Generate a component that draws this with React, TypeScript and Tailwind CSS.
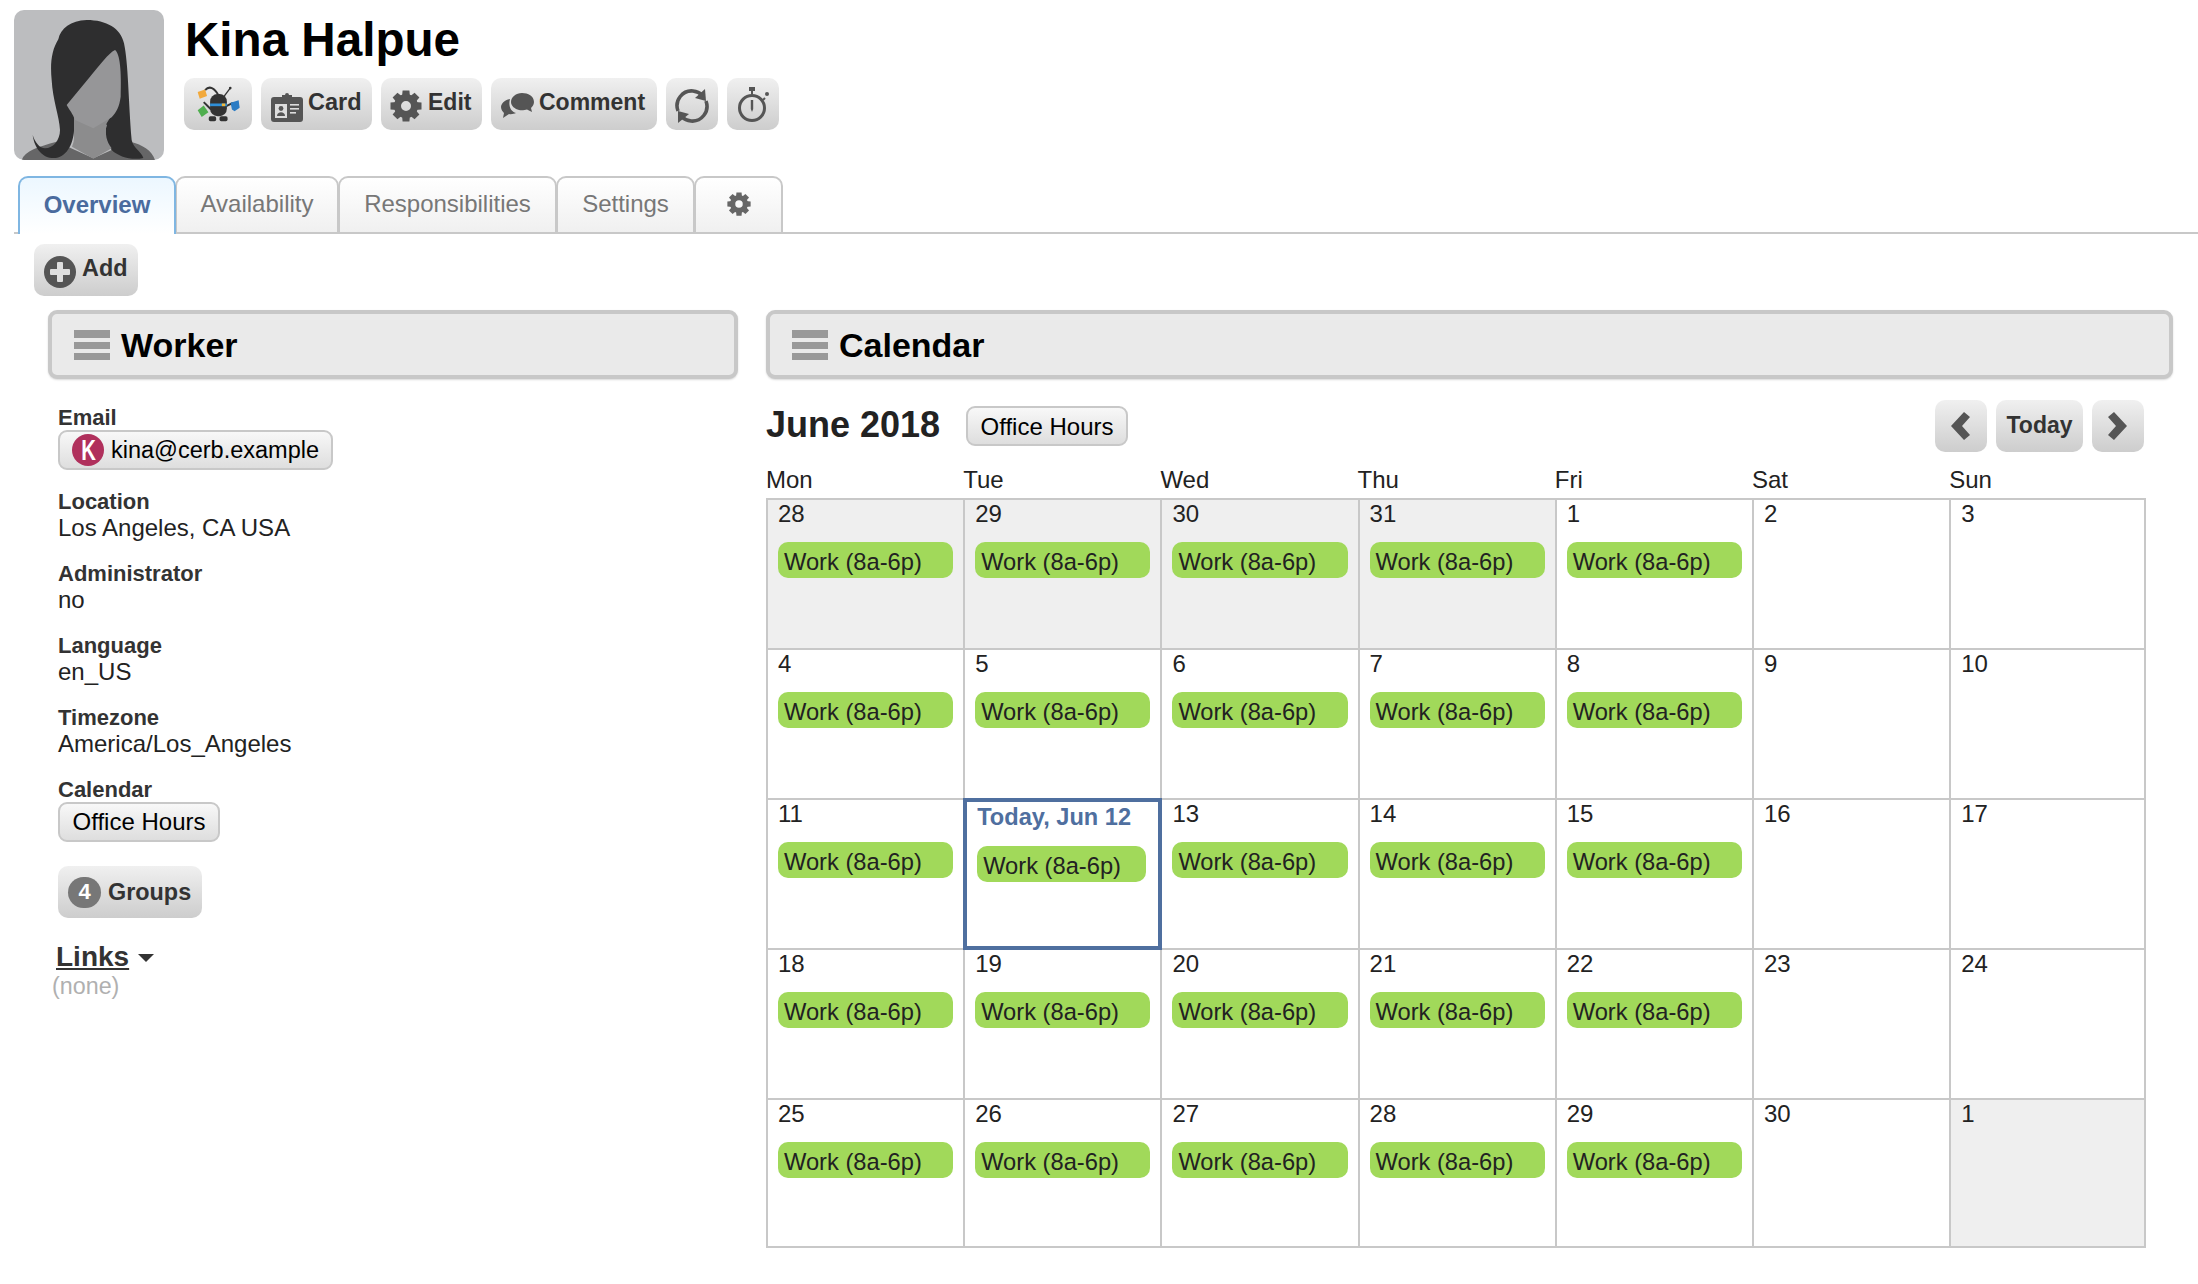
import React from 'react';

const weeks = [
  [
    { d: '28', out: true, work: true },
    { d: '29', out: true, work: true },
    { d: '30', out: true, work: true },
    { d: '31', out: true, work: true },
    { d: '1', work: true },
    { d: '2' },
    { d: '3' },
  ],
  [
    { d: '4', work: true },
    { d: '5', work: true },
    { d: '6', work: true },
    { d: '7', work: true },
    { d: '8', work: true },
    { d: '9' },
    { d: '10' },
  ],
  [
    { d: '11', work: true },
    { d: 'Today, Jun 12', work: true, today: true },
    { d: '13', work: true },
    { d: '14', work: true },
    { d: '15', work: true },
    { d: '16' },
    { d: '17' },
  ],
  [
    { d: '18', work: true },
    { d: '19', work: true },
    { d: '20', work: true },
    { d: '21', work: true },
    { d: '22', work: true },
    { d: '23' },
    { d: '24' },
  ],
  [
    { d: '25', work: true },
    { d: '26', work: true },
    { d: '27', work: true },
    { d: '28', work: true },
    { d: '29', work: true },
    { d: '30' },
    { d: '1', out: true },
  ],
];

const days = ['Mon', 'Tue', 'Wed', 'Thu', 'Fri', 'Sat', 'Sun'];

const fields = [
  { label: 'Location', value: 'Los Angeles, CA USA' },
  { label: 'Administrator', value: 'no' },
  { label: 'Language', value: 'en_US' },
  { label: 'Timezone', value: 'America/Los_Angeles' },
];

const Gear = ({ size, color = '#555' }: { size: number; color?: string }) => (
  <svg width={size} height={size} viewBox="0 0 32 32">
    {[0, 45, 90, 135, 180, 225, 270, 315].map((a) => (
      <path key={a} d="M12.6,0.5 H19.4 L20,7 H12 Z" fill={color} transform={`rotate(${a} 16 16)`} />
    ))}
    <circle cx="16" cy="16" r="8.5" fill="none" stroke={color} strokeWidth="7" />
  </svg>
);

const Avatar = () => (
  <svg width="150" height="150" viewBox="42 30 450 450" className="block">
    <path d="M65,480 C75,452 115,440 170,425 L280,475 L390,425 C430,435 455,450 465,480 Z" fill="#666667" />
    <path
      d="M260,60 C212,62 182,85 175,118 C155,150 150,190 155,240 C158,300 178,350 180,390 C180,420 160,445 135,445 C120,445 105,428 98,405 C104,448 130,478 168,474 C205,468 225,420 222,375 L320,375 C312,410 318,430 335,450 C355,470 395,482 430,474 C425,455 400,445 395,420 C385,300 385,190 372,130 C362,85 320,60 260,60 Z"
      fill="#2e2e2f"
    />
    <path d="M222,350 L222,400 C222,420 222,425 216,440 L280,476 L335,445 C320,425 314,405 320,370 L345,330 Z" fill="#8c8c8d" />
    <path
      d="M345,150 C360,160 365,215 362,290 C358,320 350,335 335,352 L280,385 L225,360 C218,340 208,330 200,315 L270,230 C300,195 325,160 345,150 Z"
      fill="#969698"
    />
  </svg>
);

const Robot = () => (
  <svg width="47" height="37" viewBox="82 80 140 110">
    <path d="M160,122 L187,86" stroke="#333" strokeWidth="4" />
    <circle cx="187" cy="86" r="4" fill="#333" />
    <path d="M112,92 C125,78 140,85 152,108" stroke="#333" strokeWidth="6" fill="none" />
    <path d="M90,98 L112,90 L118,110 L96,118 Z" fill="#f2a93b" />
    <path d="M108,128 L130,150" stroke="#333" strokeWidth="6" />
    <path d="M90,152 L108,138 L122,158 L102,172 Z" fill="#4fae4e" />
    <path d="M175,140 L195,130" stroke="#333" strokeWidth="6" />
    <path d="M188,130 L212,122 L215,145 L200,155 L192,150 Z" fill="#2b7cc4" />
    <rect x="127" y="104" width="50" height="66" rx="22" fill="#333" />
    <rect x="127" y="132" width="50" height="8" fill="#2f8fd8" />
    <rect x="162" y="132" width="10" height="8" fill="#f2b83b" />
    <rect x="123" y="170" width="22" height="15" rx="5" fill="#333" />
    <rect x="155" y="170" width="24" height="15" rx="5" fill="#333" />
  </svg>
);

const CardIcon = () => (
  <svg width="32" height="29" viewBox="0 0 32 29">
    <path
      d="M3,4 H11 V2 H14 a2,2 0 0 1 4,0 H21 V4 H29 a3,3 0 0 1 3,3 V26 a3,3 0 0 1 -3,3 H3 a3,3 0 0 1 -3,-3 V7 a3,3 0 0 1 3,-3 Z"
      fill="#555"
    />
    <rect x="4" y="11" width="12" height="14" fill="#ddd" />
    <circle cx="10" cy="15.5" r="2.4" fill="#555" />
    <path d="M6,23 C6,18 14,18 14,23 Z" fill="#555" />
    <rect x="19" y="11" width="9" height="1.6" fill="#ddd" />
    <rect x="19" y="15" width="9" height="1.6" fill="#ddd" />
    <rect x="19" y="19" width="6" height="1.6" fill="#ddd" />
  </svg>
);

const CommentIcon = () => (
  <svg width="33" height="25" viewBox="0 0 33 25">
    <path d="M9,6 C3,7 0,11 0,14 C0,17 2,19 3,20 L2,25 L8,21 C10,21.5 13,21 15,20 C10,19 7,13 9,6 Z" fill="#555" />
    <path
      d="M21,0 C27,0 33,3 33,9 C33,12 31,14 30,15 L31,19 L26,16.5 C24,17 21,17.5 18,17 C14,16 10,13 10,9 C10,4 15,0 21,0 Z"
      fill="#555"
    />
  </svg>
);

const RefreshIcon = () => (
  <svg width="34" height="34" viewBox="0 0 34 34" fill="none">
    <path d="M3,22 C-1,11 8,1 18,2 C22,2.5 25,4 27,6" stroke="#555" strokeWidth="3.6" />
    <path d="M31,12 C35,23 26,33 16,32 C12,31.5 9,30 7,28" stroke="#555" strokeWidth="3.6" />
    <path d="M30,0 L31,12 L20,9 Z" fill="#555" />
    <path d="M3,34 L3,22 L14,25 Z" fill="#555" />
  </svg>
);

const TimerIcon = () => (
  <svg width="32" height="36" viewBox="0 0 32 36" fill="none">
    <rect x="11" y="0" width="6" height="4" fill="#555" />
    <rect x="13" y="3" width="2" height="4" fill="#555" />
    <circle cx="14" cy="21" r="12.5" stroke="#555" strokeWidth="3" />
    <circle cx="29" cy="7" r="2" fill="#555" />
    <path d="M27,11 L25,13" stroke="#555" strokeWidth="2" />
    <path d="M12.8,13 H15.2 V22 L14,25 L12.8,22 Z" fill="#555" />
  </svg>
);

const PlusCircle = () => (
  <svg width="32" height="32" viewBox="0 0 32 32">
    <circle cx="16" cy="16" r="16" fill="#555" />
    <rect x="13" y="6" width="6" height="20" rx="1" fill="#dedede" />
    <rect x="6" y="13" width="20" height="6" rx="1" fill="#dedede" />
  </svg>
);

const MenuBars = () => (
  <div className="flex flex-col gap-[4px]">
    <div className="h-[8px] w-[36px] bg-[#999]" />
    <div className="h-[7px] w-[36px] bg-[#999]" />
    <div className="h-[7px] w-[36px] bg-[#999]" />
  </div>
);

const ActionButton = ({ children, className = '' }: { children: React.ReactNode; className?: string }) => (
  <div
    className={`flex h-[52px] items-center rounded-[10px] bg-linear-to-b from-[#f0f0f0] to-[#cdcdcd] font-bold text-[#333] ${className}`}
  >
    {children}
  </div>
);

const ChipButton = ({ children, className = '' }: { children: React.ReactNode; className?: string }) => (
  <div
    className={`flex h-[40px] items-center rounded-[9px] border-2 border-[#c8c8c8] bg-linear-to-b from-[#f8f8f8] to-[#dedede] text-black ${className}`}
  >
    {children}
  </div>
);

const SectionHeader = ({ title }: { title: string }) => (
  <div className="flex h-[69px] items-center gap-[11px] rounded-[9px] border-4 border-[#c8c8c8] bg-[#eaeaea] pl-[22px] shadow-[0_1px_2px_rgba(0,0,0,0.15)]">
    <MenuBars />
    <span className="mt-[2px] text-[34px] font-bold text-black">{title}</span>
  </div>
);

const WorkEvent = ({ className = '' }: { className?: string }) => (
  <div className={`flex h-[36px] items-center rounded-[10px] bg-[#a1d95a] pl-[6px] text-[23.7px] text-[#222] ${className}`}>
    <span className="mt-[3px]">Work (8a-6p)</span>
  </div>
);

const Tab = ({ children, className = '' }: { children: React.ReactNode; className?: string }) => (
  <div
    className={`flex items-center justify-center rounded-t-[10px] border-2 border-b-0 bg-linear-to-b pb-[2px] text-[24px] ${className}`}
  >
    {children}
  </div>
);

const App = () => {
  return (
    <div className="h-[1284px] w-[2198px] overflow-hidden bg-white font-['Liberation_Sans',Arial,sans-serif] text-[#222]">
      <div className="flex gap-[20px] pl-[14px] pt-[10px]">
        <div className="h-[150px] w-[150px] overflow-hidden rounded-[10px] bg-[#bcbdbf]">
          <Avatar />
        </div>
        <div>
          <h1 className="ml-[1px] h-[57px] pt-[1px] text-[47.6px] font-bold leading-[57px] text-black">Kina Halpue</h1>
          <div className="mt-[11px] flex gap-[9px] text-[23px]">
            <ActionButton className="w-[68px] justify-center">
              <Robot />
            </ActionButton>
            <ActionButton className="w-[111px] gap-[5px] pl-[10px]">
              <span className="mt-[6px]">
                <CardIcon />
              </span>
              <span className="mb-[3px] text-[23.5px]">Card</span>
            </ActionButton>
            <ActionButton className="w-[101px] gap-[6px] pl-[9px]">
              <span className="mt-[3px]">
                <Gear size={32} />
              </span>
              <span className="mb-[3px]">Edit</span>
            </ActionButton>
            <ActionButton className="w-[166px] gap-[5px] pl-[10px]">
              <span className="mt-[2px]">
                <CommentIcon />
              </span>
              <span className="mb-[3px]">Comment</span>
            </ActionButton>
            <ActionButton className="w-[52px] justify-center">
              <span className="mt-[3px]">
                <RefreshIcon />
              </span>
            </ActionButton>
            <ActionButton className="w-[52px] justify-center">
              <span className="mt-[2px] pl-[2px]">
                <TimerIcon />
              </span>
            </ActionButton>
          </div>
        </div>
      </div>

      <div className="ml-[14px] mt-[16px] flex h-[58px] items-start border-b-2 border-[#c8c8c8] pl-[4px]">
        <Tab className="relative z-10 h-[58px] w-[158px] border-[#7fb6e2] from-[#ecf7ff] to-white font-bold text-[#4a6b9e]">
          Overview
        </Tab>
        <Tab className="-ml-[1px] h-[56px] w-[164px] border-[#c8c8c8] from-white to-[#f0f0f0] text-[#777]">Availability</Tab>
        <Tab className="-ml-[1px] h-[56px] w-[219px] border-[#c8c8c8] from-white to-[#f0f0f0] text-[#777]">Responsibilities</Tab>
        <Tab className="-ml-[1px] h-[56px] w-[139px] border-[#c8c8c8] from-white to-[#f0f0f0] text-[#777]">Settings</Tab>
        <Tab className="-ml-[1px] h-[56px] w-[89px] border-[#c8c8c8] from-white to-[#f0f0f0] text-[#777]">
          <Gear size={24} color="#666" />
        </Tab>
      </div>

      <ActionButton className="ml-[34px] mt-[10px] w-[104px] gap-[6px] pl-[10px] text-[23.4px]">
        <span className="mt-[3px]">
          <PlusCircle />
        </span>
        <span className="mb-[2px]">Add</span>
      </ActionButton>

      <div className="mt-[14px] flex items-start pl-[48px]">
        <div className="w-[690px]">
          <SectionHeader title="Worker" />
          <div className="pl-[10px] pt-[26px] text-[24px] leading-[26px]">
            <div className="text-[22px] font-bold leading-[26px] text-[#333]">Email</div>
            <ChipButton className="-mt-[1px] w-[275px] gap-[7px] pl-[12px] text-[23.5px]">
              <div className="flex h-[32px] w-[32px] items-center justify-center rounded-full bg-[#b0305c] font-bold text-white">
                <span className="scale-x-[0.7] text-[29px]">K</span>
              </div>
              <span>kina@cerb.example</span>
            </ChipButton>
            {fields.map((f, i) => (
              <div key={f.label} className={i === 0 ? 'mt-[19px]' : 'mt-[20px]'}>
                <div className="text-[22px] font-bold leading-[26px] text-[#333]">{f.label}</div>
                <div className="leading-[26px]">{f.value}</div>
              </div>
            ))}
            <div className="mt-[20px] text-[22px] font-bold leading-[26px] text-[#333]">Calendar</div>
            <ChipButton className="-mt-[1px] w-[162px] justify-center text-[24px]">Office Hours</ChipButton>
            <ActionButton className="mt-[24px] w-[144px] gap-[7px] pl-[10px] text-[23.4px]">
              <div className="flex h-[31px] w-[33px] items-center justify-center rounded-full bg-[#777] text-[22px] font-bold text-white">
                4
              </div>
              <span className="mb-[1px]">Groups</span>
            </ActionButton>
            <div className="-ml-[2px] mt-[23px] flex items-center gap-[9px] leading-[32px]">
              <span className="text-[28px] font-bold text-[#333] underline">Links</span>
              <span className="mt-[2px] h-0 w-0 border-x-[8px] border-t-[8px] border-x-transparent border-t-[#333]" />
            </div>
            <div className="-ml-[6px] text-[23.3px] leading-[26px] text-[#b0b0b0]">(none)</div>
          </div>
        </div>

        <div className="ml-[28px] w-[1407px]">
          <SectionHeader title="Calendar" />
          <div className="mt-[21px] flex h-[52px] w-[1378px] items-center">
            <h2 className="mb-[3px] w-[200px] text-[36px] font-bold text-[#222]">June 2018</h2>
            <ChipButton className="w-[162px] justify-center pt-[1px] text-[24px]">Office Hours</ChipButton>
            <div className="ml-auto flex gap-[9px] text-[23px]">
              <ActionButton className="w-[52px] justify-center">
                <svg width="20" height="28" viewBox="0 0 20 28" className="mr-[3px]">
                  <path d="M14,0 L20,5 L12,14 L20,23 L14,28 L1,14 Z" fill="#555" />
                </svg>
              </ActionButton>
              <ActionButton className="w-[87px] justify-center">
                <span className="mb-[1px]">Today</span>
              </ActionButton>
              <ActionButton className="w-[52px] justify-center">
                <svg width="20" height="28" viewBox="0 0 20 28">
                  <path d="M6,0 L0,5 L8,14 L0,23 L6,28 L19,14 Z" fill="#555" />
                </svg>
              </ActionButton>
            </div>
          </div>
          <div className="mt-[15px] grid h-[26px] w-[1380px] grid-cols-[repeat(7,197.2px)] text-[24px] leading-[26px]">
            {days.map((d) => (
              <div key={d}>{d}</div>
            ))}
          </div>
          <div className="mt-[5px] grid w-[1380px] grid-cols-[repeat(6,197.2px)_1fr] border-l-2 border-t-2 border-[#c8c8c8] text-[24px] leading-[26px]">
            {weeks.flat().map((c, i) => (
              <div
                key={i}
                className={`relative border-b-2 border-r-2 border-[#c8c8c8] ${i >= 28 ? 'h-[148px]' : 'h-[150px]'} ${c.out ? 'bg-[#efefef]' : 'bg-white'} ${c.today ? 'pl-[12px] pt-[4px]' : 'pl-[10px] pt-[1px]'}`}
              >
                <div className={c.today ? 'text-[23.6px] font-bold text-[#4f6f9f]' : ''}>{c.d}</div>
                {c.work && <WorkEvent className={c.today ? 'mt-[16px] w-[169px]' : 'mr-[10px] mt-[15px]'} />}
                {c.today && <div className="absolute -left-[2px] -top-[2px] bottom-[-2px] right-[-2px] border-4 border-[#4f6f9f]" />}
              </div>
            ))}
          </div>
        </div>
      </div>
    </div>
  );
};

export default App;
